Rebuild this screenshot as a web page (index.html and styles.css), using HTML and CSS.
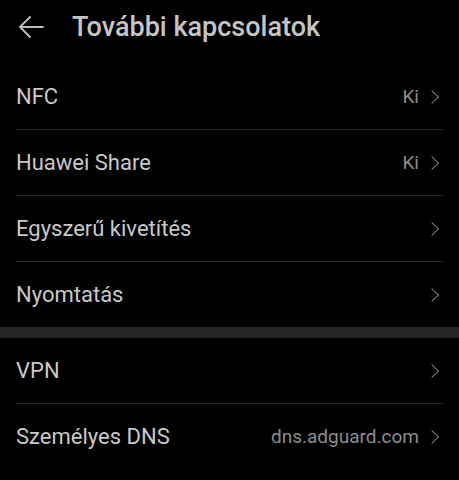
FILE: index.html
```html
<!DOCTYPE html>
<html lang="hu">
<head>
<meta charset="utf-8">
<link rel="stylesheet" href="styles.css">
</head>
<body>
<header class="bar">
  <svg class="back" width="28" height="24" viewBox="0 0 28 24"><path d="M26 12H3M13 2L3 12l10 10" fill="none" stroke="#bdbdbd" stroke-width="1.8" stroke-linecap="round" stroke-linejoin="round"/></svg>
  <h1 class="title">További kapcsolatok</h1>
</header>
<section class="group first">
  <div class="row"><span class="label">NFC</span><span class="value">Ki</span><span class="chev"></span></div>
  <div class="row"><span class="label">Huawei Share</span><span class="value">Ki</span><span class="chev"></span></div>
  <div class="row"><span class="label">Egyszerű kivetítés</span><span class="chev"></span></div>
  <div class="row"><span class="label">Nyomtatás</span><span class="chev"></span></div>
</section>
<div class="band"></div>
<section class="group">
  <div class="row"><span class="label">VPN</span><span class="chev"></span></div>
  <div class="row"><span class="label">Személyes DNS</span><span class="value">dns.adguard.com</span><span class="chev"></span></div>
</section>
</body>
</html>
```
FILE: styles.css
```css
html, body { margin: 0; padding: 0; background: #000; }
body { font-family: Roboto, "Noto Sans", sans-serif; color: #c9c9c9; width: 459px; height: 480px; overflow: hidden; }
.bar { height: 54px; display: flex; align-items: center; padding-left: 17px; }
.back { flex: none; }
.title { margin: 0 0 0 27px; font-size: 27px; font-weight: 500; color: #c4c4c4; letter-spacing: 0; }
.group { padding: 0 16px; }
.first { padding-top: 10px; }
.row { height: 65px; display: flex; align-items: center; border-bottom: 1px solid #262626; }
.group .row:last-child { border-bottom: 0; }
.label { flex: 1; font-size: 22px; color: #c8c8c8; }
.value { font-size: 19px; color: #8c8c8c; margin-right: 8px; }
.chev { width: 9px; height: 9px; border-top: 1.6px solid #7c7c7c; border-right: 1.6px solid #7c7c7c; transform: rotate(45deg); margin-right: 6px; }
.band { height: 11px; background: #252525; }
```
